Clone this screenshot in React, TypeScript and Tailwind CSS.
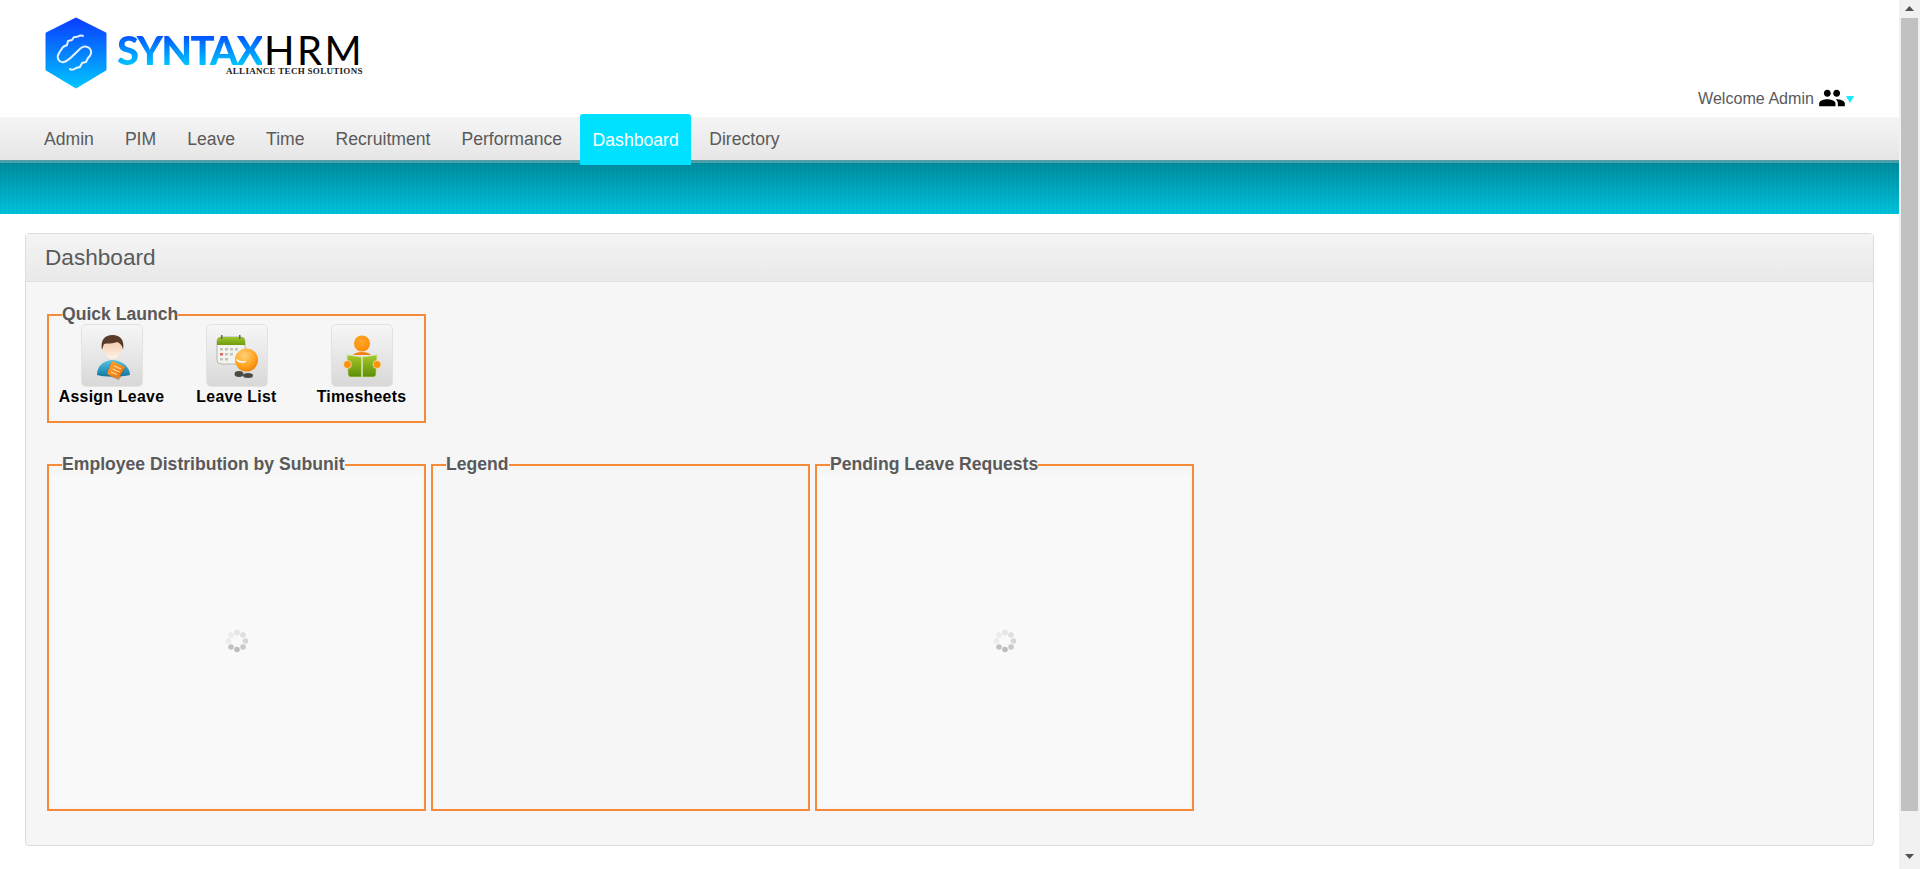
import { MdPeople } from "react-icons/md";

const navItems = ["Admin", "PIM", "Leave", "Time", "Recruitment", "Performance", "Dashboard", "Directory"];

function Logo() {
  return (
    <div className="flex items-start">
      <svg width="64" height="72" viewBox="0 0 64 72" className="shrink-0">
        <defs>
          <linearGradient id="hex" x1="0" y1="0" x2="0" y2="1">
            <stop offset="0" stopColor="#0a3cff" />
            <stop offset="1" stopColor="#00c6ff" />
          </linearGradient>
        </defs>
        <path d="M32 1 L62 16 L62 53 L32 71 L2 53 L2 16 Z" fill="url(#hex)" stroke="url(#hex)" strokeLinejoin="round" strokeWidth="1" />
        <path
          d="M39 19 C36 17 33 21 30 20 L28 23 L24 24 L23 28 L19 30 L15 36 C12 41 15 46 20 45 C25 44 32 35 37 31 C41 28 46 30 47 34 C48 37 46 39 44 41 L42 45 L38 46 L36 50 L32 51 C30 53 27 53 26 52"
          fill="none"
          stroke="#ffffff"
          strokeWidth="2"
          strokeLinecap="round"
          strokeLinejoin="round"
          opacity="0.9"
        />
      </svg>
      <div className="relative ml-[9px] mt-[18px] flex h-[30px] items-center font-['Lato',sans-serif] text-[40px] leading-[30px]">
        <span className="bg-gradient-to-b from-[#0a4cff] to-[#00c4ff] bg-clip-text font-black tracking-[-1.7px] text-transparent">SYNTAX</span>
        <span className="ml-[2px] font-normal tracking-[2.4px] text-black">HRM</span>
        <span className="absolute left-[109px] top-[32px] whitespace-nowrap font-['Liberation_Serif',serif] text-[9px] font-bold leading-none tracking-[0.3px] text-[#222]">
          ALLIANCE TECH SOLUTIONS
        </span>
      </div>
    </div>
  );
}

function AssignIcon() {
  return (
    <svg width="48" height="50" viewBox="0 0 48 50">
      <defs>
        <linearGradient id="sk" x1="0" y1="0" x2="0" y2="1">
          <stop offset="0" stopColor="#eebd98" />
          <stop offset="1" stopColor="#fff3e8" />
        </linearGradient>
        <linearGradient id="sh" x1="0" y1="0" x2="0" y2="1">
          <stop offset="0" stopColor="#5cc4e4" />
          <stop offset="1" stopColor="#0c78a4" />
        </linearGradient>
        <linearGradient id="dc" x1="0" y1="0" x2="1" y2="1">
          <stop offset="0" stopColor="#ffa726" />
          <stop offset="1" stopColor="#ee6c10" />
        </linearGradient>
      </defs>
      <path d="M9 44 C9 35 15 30 24 29 C34 29 42 36 42 44 C33 46 16 46 9 44 Z" fill="url(#sh)" />
      <ellipse cx="24.5" cy="16" rx="9" ry="12" fill="url(#sk)" />
      <path d="M14 19 C12 9 17 4 24.5 4 C32 4 37 9 35 19 C34 14 32 12 29 11 C25 13 19 12 16 13 Z" fill="#5a3a28" />
      <path d="M23 31 L38 37 L31 49 L18 44 Z" fill="#6a5a44" opacity="0.45" />
      <path d="M24 30 L37 36 L30 48 L19 43 Z" fill="url(#dc)" />
      <path d="M26 35 L33 38 M24.5 38 L31.5 41 M23 41 L29 43.5" stroke="#ffe0a8" strokeWidth="1.2" />
    </svg>
  );
}

function LeaveIcon() {
  return (
    <svg width="48" height="50" viewBox="0 0 48 50">
      <defs>
        <radialGradient id="ball" cx="0.4" cy="0.3" r="0.8">
          <stop offset="0" stopColor="#ffd27a" />
          <stop offset="0.6" stopColor="#ffa31e" />
          <stop offset="1" stopColor="#e77a05" />
        </radialGradient>
        <linearGradient id="cal" x1="0" y1="0" x2="0" y2="1">
          <stop offset="0" stopColor="#9cc62c" />
          <stop offset="1" stopColor="#6f9c10" />
        </linearGradient>
      </defs>
      <rect x="4" y="6" width="28" height="27" rx="4" fill="#f4f4ee" stroke="#b5b5ad" />
      <path d="M4 14 L4 10 C4 8 6 6 8 6 L28 6 C30 6 32 8 32 10 L32 14 Z" fill="url(#cal)" />
      <rect x="8" y="4" width="1.5" height="4" fill="#666" />
      <rect x="26" y="4" width="1.5" height="4" fill="#666" />
      <g fill="#c4c4be">
        <rect x="7" y="17" width="3" height="2.5" />
        <rect x="12" y="17" width="3" height="2.5" />
        <rect x="17" y="17" width="3" height="2.5" />
        <rect x="22" y="17" width="3" height="2.5" />
        <rect x="12" y="22" width="3" height="2.5" />
        <rect x="17" y="22" width="3" height="2.5" />
        <rect x="7" y="27" width="3" height="2.5" />
        <rect x="12" y="27" width="3" height="2.5" />
      </g>
      <rect x="7" y="22" width="3" height="2.5" fill="#d2675a" />
      <ellipse cx="26" cy="43" rx="4.5" ry="3" fill="#4a4a44" />
      <ellipse cx="35" cy="44.5" rx="5" ry="2.5" fill="#4a4a44" />
      <circle cx="33.5" cy="29" r="11.5" fill="url(#ball)" />
      <path d="M24 29 C26 31 29 31.5 32 30.5" stroke="#fff" strokeWidth="1.6" fill="none" strokeLinecap="round" />
    </svg>
  );
}

function TimesheetIcon() {
  return (
    <svg width="48" height="50" viewBox="0 0 48 50">
      <defs>
        <radialGradient id="head" cx="0.45" cy="0.35" r="0.7">
          <stop offset="0" stopColor="#ffa929" />
          <stop offset="1" stopColor="#fb8a05" />
        </radialGradient>
        <linearGradient id="book" x1="0" y1="0" x2="0" y2="1">
          <stop offset="0" stopColor="#a7c92c" />
          <stop offset="1" stopColor="#5c8d08" />
        </linearGradient>
      </defs>
      <circle cx="24" cy="12.5" r="8" fill="url(#head)" />
      <path d="M15 24 C18 20 30 20 33 24 Z" fill="#f57f12" />
      <path d="M9 24 L23.5 26 L23.5 46 L13 46 C11 46 10 45 10 43 Z" fill="url(#book)" stroke="#d6e6a0" strokeWidth="0.6" />
      <path d="M39 24 L24.5 26 L24.5 46 L35 46 C37 46 38 45 38 43 Z" fill="url(#book)" stroke="#d6e6a0" strokeWidth="0.6" />
      <circle cx="9.5" cy="33.5" r="4" fill="#fb930f" stroke="#fff" strokeWidth="0.5" />
      <circle cx="39" cy="33.5" r="4" fill="#fb930f" stroke="#fff" strokeWidth="0.5" />
    </svg>
  );
}

function Spinner() {
  const dots = [
    [12, 3.5, "#e4e4e4"],
    [18, 6, "#dedede"],
    [20.5, 12, "#d6d6d6"],
    [18, 18, "#c8c8c8"],
    [12, 20.5, "#bcbcbc"],
    [6, 18, "#c2c2c2"],
    [3.5, 12, "#ececec"],
    [6, 6, "#eaeaea"],
  ] as const;
  return (
    <svg width="24" height="24" viewBox="0 0 24 24">
      {dots.map(([x, y, c], i) => (
        <circle key={i} cx={x} cy={y} r="2.8" fill={c} />
      ))}
    </svg>
  );
}

function Box({ title, loading }: { title: string; loading?: boolean }) {
  return (
    <fieldset className="h-[357px] w-[379px] border-2 border-[#f58a38] px-[2px] pb-[2px]">
      <legend className="ml-[11px] pb-[2px] text-[17.6px] font-bold leading-[20px] text-[#5a5a5a]">{title}</legend>
      {loading ? (
        <div className="flex h-[331px] items-center justify-center bg-[#f9f9f9] pb-[2px] pl-[1px]">
          <Spinner />
        </div>
      ) : null}
    </fieldset>
  );
}

function Launch({ label, children }: { label: string; children: React.ReactNode }) {
  return (
    <div className="flex w-[125px] flex-col items-center">
      <div className="flex h-[63px] w-[62px] items-center justify-center rounded-[5px] border border-[#e4e4dc] bg-gradient-to-b from-[#f6f6f6] to-[#d8d8d8]">
        {children}
      </div>
      <span className="whitespace-nowrap text-[15.8px] font-bold leading-[20px] tracking-[0.3px] text-black">{label}</span>
    </div>
  );
}

export default function App() {
  return (
    <div className="flex h-screen overflow-hidden bg-white font-['Liberation_Sans',Arial,sans-serif]">
      <div className="min-w-0 flex-1">
        <header className="flex h-[117px] justify-between pl-[44px] pr-[45px] pt-[17px]">
          <Logo />
          <div className="mt-[66px] flex h-[30px] items-center text-[16.1px] text-[#5a5a5a]">
            <span>Welcome Admin</span>
            <MdPeople className="ml-[4px] text-black" size={28} />
            <svg width="8" height="7" viewBox="0 0 8 7" className="mt-[2px]">
              <path d="M0 0 L8 0 L4 7 Z" fill="#19e9fb" />
            </svg>
          </div>
        </header>

        <nav className="flex h-[46px] items-start gap-[5px] border-b-[3px] border-[#4f9ea8] bg-gradient-to-b from-[#f5f5f5] to-[#e6e6e6] pl-[31px]">
          {navItems.map((item) =>
            item === "Dashboard" ? (
              <a key={item} className="-mt-[3px] flex h-[51px] items-center rounded-t-[3px] bg-[#00e1ff] px-[12.5px] pt-[2px] text-[17.6px] text-white">
                {item}
              </a>
            ) : (
              <a key={item} className="flex h-[43px] items-center px-[13px] pt-[2px] text-[17.6px] text-[#5a5a5a]">
                {item}
              </a>
            ),
          )}
        </nav>

        <div className="h-[51px] bg-[repeating-linear-gradient(90deg,rgba(0,0,0,0.03)_0px,rgba(0,0,0,0.03)_2px,transparent_2px,transparent_4px),linear-gradient(180deg,#008c9f,#00c4de)]"></div>

        <section className="mx-[25px] mt-[19px] h-[613px] rounded-[4px] border border-[#dcdcdc] bg-[#f6f6f6]">
          <div className="flex h-[48px] items-center border-b border-[#e0e0e0] bg-gradient-to-b from-[#f4f4f4] to-[#e9e9e9] px-[19px] text-[22.6px] text-[#5a5a5a]">
            Dashboard
          </div>
          <div className="px-[21px] pt-[22px]">
            <fieldset className="h-[119px] w-[379px] border-2 border-[#f58a38]">
              <legend className="ml-[13px] pb-[2px] text-[17.6px] font-bold leading-[20px] text-[#5a5a5a]">Quick Launch</legend>
              <div className="-mt-[2px] flex">
                <Launch label="Assign Leave"><AssignIcon /></Launch>
                <Launch label="Leave List"><LeaveIcon /></Launch>
                <Launch label="Timesheets"><TimesheetIcon /></Launch>
              </div>
            </fieldset>
            <div className="mt-[31px] flex gap-[5px]">
              <Box title="Employee Distribution by Subunit" loading />
              <Box title="Legend" />
              <Box title="Pending Leave Requests" loading />
            </div>
          </div>
        </section>
      </div>

      <div className="flex w-[21px] shrink-0 flex-col items-center bg-[#f1f1f1]">
        <svg width="9" height="5" viewBox="0 0 9 5" className="mt-[6px] mb-[7px]">
          <path d="M0 5 L9 5 L4.5 0 Z" fill="#505050" />
        </svg>
        <div className="w-[17px] flex-1 bg-[#c1c1c1]"></div>
        <svg width="9" height="5" viewBox="0 0 9 5" className="mt-[43px] mb-[10px]">
          <path d="M0 0 L9 0 L4.5 5 Z" fill="#505050" />
        </svg>
      </div>
    </div>
  );
}
